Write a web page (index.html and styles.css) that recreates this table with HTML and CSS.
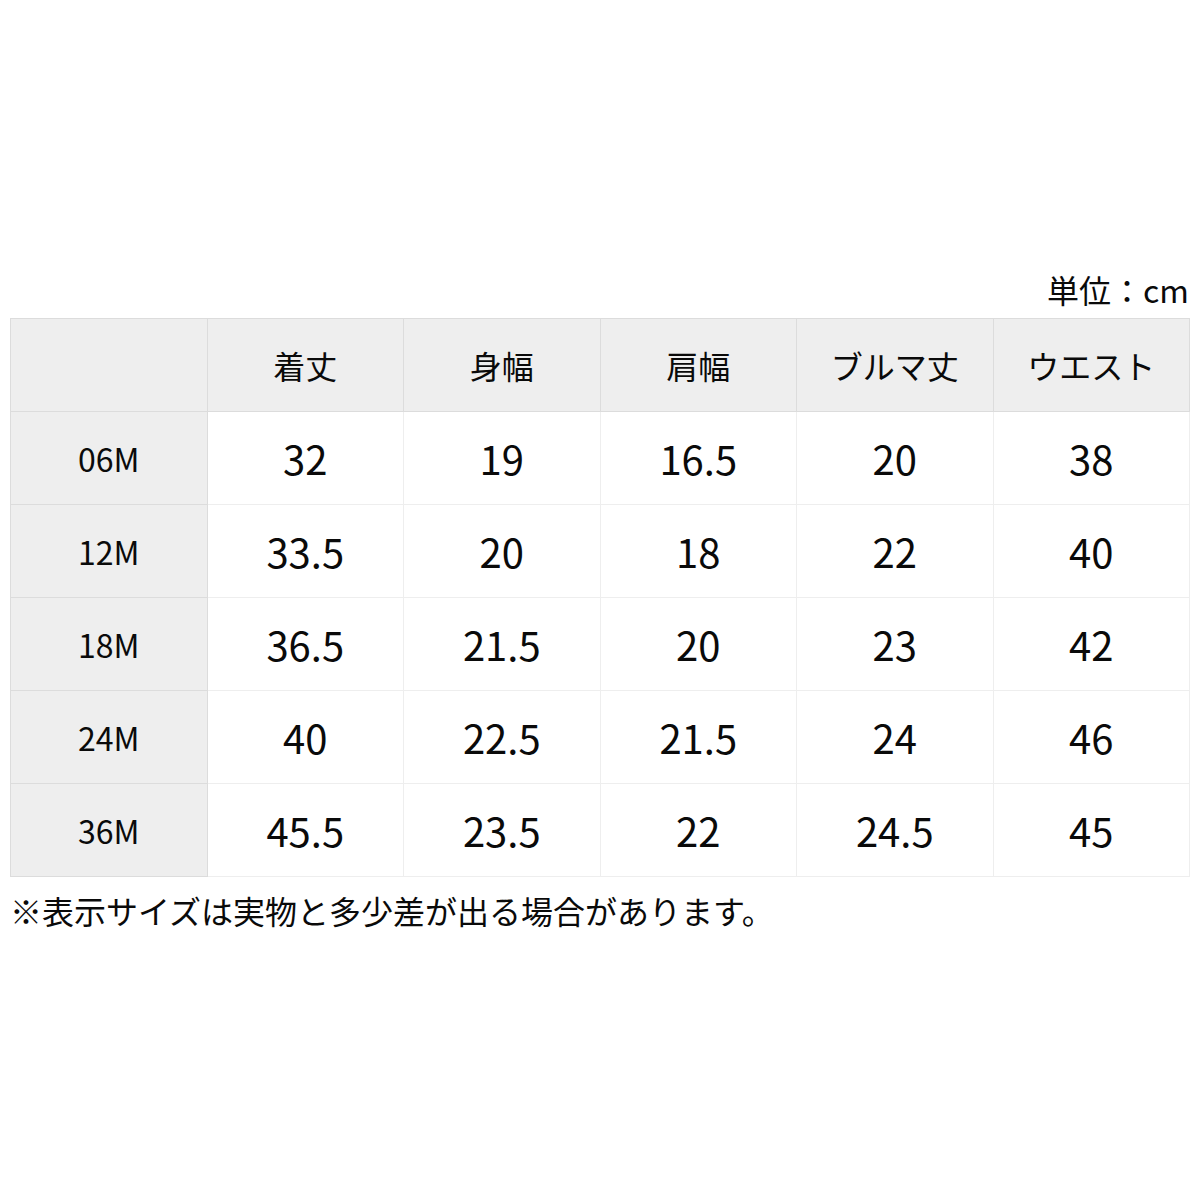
FILE: index.html
```html
<!DOCTYPE html>
<html lang="ja">
<head>
<meta charset="utf-8">
<link rel="stylesheet" href="styles.css">
</head>
<body>
<div class="page">
  <div class="unit">単位：cm</div>
  <table class="size">
    <thead>
      <tr><th class="corner"></th><th>着丈</th><th>身幅</th><th>肩幅</th><th>ブルマ丈</th><th>ウエスト</th></tr>
    </thead>
    <tbody>
      <tr><th>06M</th><td>32</td><td>19</td><td>16.5</td><td>20</td><td>38</td></tr>
      <tr><th>12M</th><td>33.5</td><td>20</td><td>18</td><td>22</td><td>40</td></tr>
      <tr><th>18M</th><td>36.5</td><td>21.5</td><td>20</td><td>23</td><td>42</td></tr>
      <tr><th>24M</th><td>40</td><td>22.5</td><td>21.5</td><td>24</td><td>46</td></tr>
      <tr><th>36M</th><td>45.5</td><td>23.5</td><td>22</td><td>24.5</td><td>45</td></tr>
    </tbody>
  </table>
  <p class="note">※表示サイズは実物と多少差が出る場合があります。</p>
</div>
</body>
</html>
```
FILE: styles.css
```css
html, body {
  margin: 0;
  padding: 0;
  background: #ffffff;
}
body {
  font-family: "Noto Sans CJK JP", "Noto Sans", sans-serif;
  color: #0a0a0a;
}
.page {
  width: 1180px;
  margin-left: 10px;
  padding-top: 268px;
}
.unit {
  text-align: right;
  font-size: 32px;
  line-height: 42px;
  padding-right: 1px;
  margin-bottom: 8px;
}
.size {
  width: 1180px;
  border-collapse: collapse;
  table-layout: fixed;
  border: 1px solid #d9d9d9;
}
.size th, .size td {
  height: 92px;
  padding: 0;
  text-align: center;
  vertical-align: middle;
  font-weight: normal;
}
.size thead th {
  background: #eeeeee;
  border: 1px solid #dcdcdc;
  font-size: 32px;
}
.size tbody th {
  background: #eeeeee;
  border: 1px solid #dcdcdc;
  font-size: 32px;
}
.size td {
  border: 1px solid #eeeeee;
  font-size: 40px;
  background: #ffffff;
}
.note {
  margin: 12px 0 0 0;
  font-size: 32px;
  line-height: 42px;
}
```
